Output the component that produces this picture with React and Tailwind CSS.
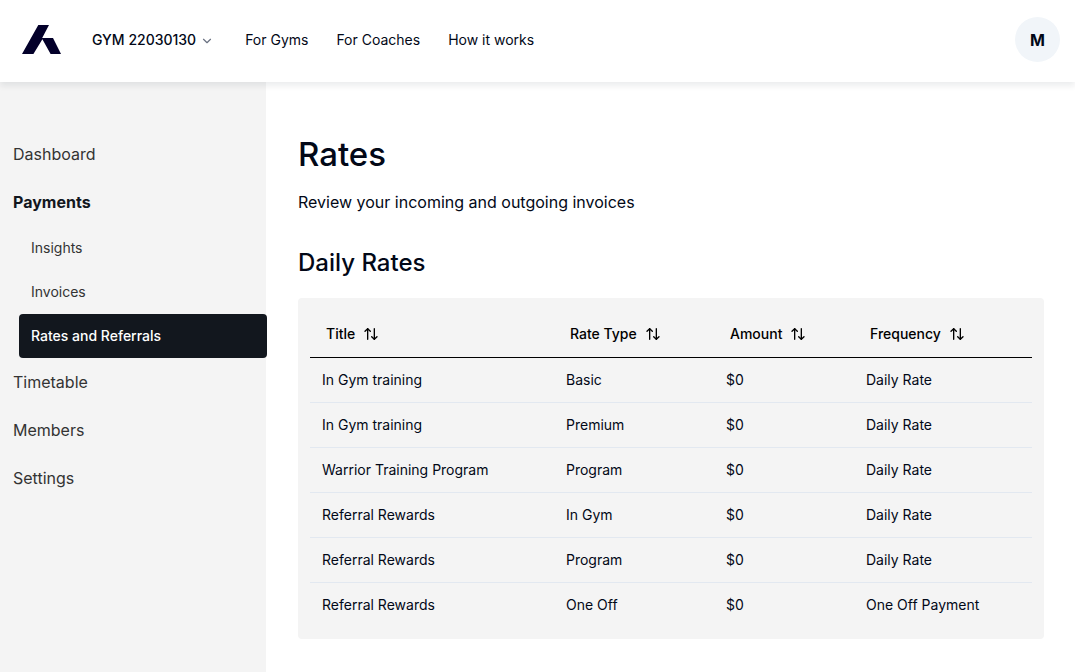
import { ArrowUpDown, ChevronDown } from 'lucide-react';

const topLinks = ['For Gyms', 'For Coaches', 'How it works'];

const columns = [
  { label: 'Title', width: 'w-[244px]' },
  { label: 'Rate Type', width: 'w-[160px]' },
  { label: 'Amount', width: 'w-[140px]' },
  { label: 'Frequency', width: 'w-auto' },
];

const rates = [
  ['In Gym training', 'Basic', '$0', 'Daily Rate'],
  ['In Gym training', 'Premium', '$0', 'Daily Rate'],
  ['Warrior Training Program', 'Program', '$0', 'Daily Rate'],
  ['Referral Rewards', 'In Gym', '$0', 'Daily Rate'],
  ['Referral Rewards', 'Program', '$0', 'Daily Rate'],
  ['Referral Rewards', 'One Off', '$0', 'One Off Payment'],
];

function Logo() {
  return (
    <svg viewBox="0 0 39 29" className="h-[29px] w-[39px]" fill="#03002a" aria-hidden="true">
      <path d="M16.3 0H27L20.2 13H31L39 29H28.6L20.4 14.2L11.4 29H0Z" />
    </svg>
  );
}

function Header() {
  return (
    <header className="relative z-10 flex h-[82px] items-center bg-white pr-[15px] pb-[3px] pl-[22px] shadow-[0_4px_6px_rgba(15,23,42,0.08)]">
      <a href="#home" aria-label="Home">
        <Logo />
      </a>
      <button type="button" className="ml-[31px] flex items-center gap-1 text-sm font-medium">
        GYM 22030130
        <ChevronDown className="mt-0.5 size-3.5 text-gray-500" />
      </button>
      <nav className="ml-[31px] flex gap-7 text-sm">
        {topLinks.map((label) => (
          <a key={label} href="#top">{label}</a>
        ))}
      </nav>
      <button type="button" className="ml-auto size-[45px] rounded-full bg-slate-100 text-base font-bold">
        M
      </button>
    </header>
  );
}

function SideLink({ children, bold }) {
  return (
    <a
      href="#section"
      className={
        bold
          ? 'flex h-12 items-center pl-[13px] font-bold text-[#12171e]'
          : 'flex h-12 items-center pl-[13px] text-[#333333]'
      }
    >
      {children}
    </a>
  );
}

function SubLink({ children, active }) {
  return (
    <a
      href="#payments"
      aria-current={active ? 'page' : undefined}
      className={
        active
          ? '-mr-px ml-[19px] flex h-11 items-center rounded bg-[#12171e] px-3 text-sm font-medium text-white'
          : 'ml-[19px] flex h-11 items-center px-3 text-sm text-[#333333]'
      }
    >
      {children}
    </a>
  );
}

function Sidebar() {
  return (
    <nav className="w-[266px] shrink-0 bg-[#f4f4f4] pt-12">
      <SideLink>Dashboard</SideLink>
      <SideLink bold>Payments</SideLink>
      <SubLink>Insights</SubLink>
      <SubLink>Invoices</SubLink>
      <SubLink active>Rates and Referrals</SubLink>
      <SideLink>Timetable</SideLink>
      <SideLink>Members</SideLink>
      <SideLink>Settings</SideLink>
    </nav>
  );
}

function RatesTable() {
  return (
    <div className="mt-5 rounded bg-[#f4f4f4] p-3">
      <table className="w-full table-fixed border-collapse text-left text-sm">
        <thead>
          <tr className="border-b border-black">
            {columns.map(({ label, width }) => (
              <th key={label} scope="col" className={`h-[47px] px-4 pt-0.5 font-medium text-black ${width}`}>
                <button type="button" className="flex items-center gap-2 whitespace-nowrap">
                  {label}
                  <ArrowUpDown className="size-4" />
                </button>
              </th>
            ))}
          </tr>
        </thead>
        <tbody>
          {rates.map((row, i) => (
            <tr key={i} className="border-b border-slate-200 last:border-b-0">
              {row.map((cell, j) => (
                <td key={j} className="px-3 py-3">{cell}</td>
              ))}
            </tr>
          ))}
        </tbody>
      </table>
    </div>
  );
}

export default function App() {
  return (
    <div className="flex min-h-screen flex-col bg-white font-[Inter,sans-serif] text-[#020817]">
      <Header />
      <div className="flex flex-1">
        <Sidebar />
        <main className="min-w-0 flex-1 pt-12 pr-[31px] pb-8 pl-8">
          <h1 className="text-[33px] leading-[48px] font-medium">Rates</h1>
          <p className="mt-3 leading-6">Review your incoming and outgoing invoices</p>
          <h2 className="mt-[34px] text-2xl leading-[30px] font-medium">Daily Rates</h2>
          <RatesTable />
        </main>
      </div>
    </div>
  );
}
